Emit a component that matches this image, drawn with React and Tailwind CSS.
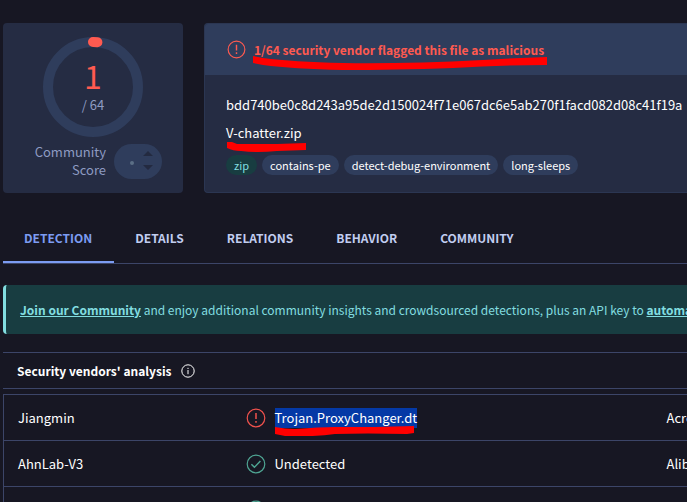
import clsx from 'clsx';

const tabs = ['Detection', 'Details', 'Relations', 'Behavior', 'Community'];

const tags = ['zip', 'contains-pe', 'detect-debug-environment', 'long-sleeps'];

const vendors = [
  { left: 'Jiangmin', result: 'Trojan.ProxyChanger.dt', malicious: true, right: 'Acronis (Static ML)' },
  { left: 'AhnLab-V3', result: 'Undetected', right: 'Alibaba' },
  { left: 'ALYac', result: 'Undetected', right: 'Antiy-AVL' },
];

const AlertIcon = ({ className }) => (
  <svg viewBox="0 0 20 20" fill="none" stroke="currentColor" strokeWidth="1.2" className={className} aria-hidden="true">
    <circle cx="10" cy="10" r="8.8" />
    <path d="M10 5v6" strokeWidth="1.5" />
    <path d="M10 13v1.7" strokeWidth="1.5" />
  </svg>
);

const CheckIcon = ({ className }) => (
  <svg viewBox="0 0 20 20" fill="none" stroke="currentColor" strokeWidth="1.2" className={className} aria-hidden="true">
    <circle cx="10" cy="10" r="8.8" />
    <path d="m5.4 10.3 3 3 6-6.2" strokeWidth="1.5" />
  </svg>
);

const InfoIcon = ({ className }) => (
  <svg viewBox="0 0 14 14" fill="none" stroke="currentColor" className={className} aria-hidden="true">
    <circle cx="7" cy="7" r="6.2" />
    <path d="M7 6v4.2M7 3.8v1.2" />
  </svg>
);

// Hand drawn marker line below a piece of text
const Marker = ({ viewBox, d, className }) => (
  <svg viewBox={viewBox} preserveAspectRatio="none" fill="#ff0000" className={clsx('absolute max-w-none pointer-events-none', className)} aria-hidden="true">
    <path d={d} />
  </svg>
);

const ScoreCard = () => (
  <section className="w-45 shrink-0 rounded bg-[#252c43] py-[14px]">
    <div className="relative mx-auto size-[100px]">
      <svg viewBox="0 0 100 100" fill="none" strokeWidth="10" className="size-full" aria-hidden="true">
        <circle cx="50" cy="50" r="45" stroke="#2f3d5c" />
        <path d="M50 5A45 45 0 0 1 54.4 5.2" stroke="#ff5a50" strokeLinecap="round" />
      </svg>
      <div className="absolute inset-0 flex flex-col items-center pt-5 text-[#8e9bc2]">
        <span className="text-[32px] leading-9 text-[#ff5a50]">1</span>
        <span className="text-[13px] leading-6">/ 64</span>
      </div>
    </div>
    <div className="mt-[6px] flex items-center justify-end gap-2 pr-[21px]">
      <div className="w-20 text-right text-[13px] leading-[18px] text-[#8e9bc2]">Community Score</div>
      <div className="flex h-[35px] w-12 items-center rounded-full bg-[#2f3d5c] pl-4">
        <svg viewBox="0 0 24 20" className="h-5 w-6" aria-hidden="true">
          <circle cx="2" cy="12" r="2" fill="#5b6f86" />
          <path d="M13 5l5-5 5 5zM13 14h10l-5 5z" fill="#232a40" />
        </svg>
      </div>
    </div>
  </section>
);

const FileCard = () => (
  <section className="min-w-0 flex-1 overflow-hidden rounded-l border border-r-0 border-[#2b3652] bg-[#252c43]">
    <div className="flex h-[51px] items-center gap-2 bg-[#2f3d5c] pl-[22px] text-[#ff5a50]">
      <AlertIcon className="size-[19px] shrink-0" />
      <h1 className="relative text-[12px] leading-5 font-bold whitespace-nowrap">
        1/64 security vendor flagged this file as malicious
        <Marker
          viewBox="0 0 294 14"
          d="M0 0L10 2Q40 6 90 7Q150 8 230 4Q260 2 294 1V9Q250 9 200 12Q140 14 90 14Q40 13 10 9L0 7Z"
          className="-left-px top-4 h-[14px] w-[294px]"
        />
      </h1>
    </div>
    <div className="px-[21px] pt-5 pb-[17px] text-[13px] text-white">
      <p className="leading-5 whitespace-nowrap">bdd740be0c8d243a95de2d150024f71e067dc6e5ab270f1facd082d08c41f19a</p>
      <p className="relative mt-2 w-fit leading-5">
        V-chatter.zip
        <Marker
          viewBox="0 0 79 10"
          d="M0 0H5L10 2H50L79 1V8L50 9Q30 11 14 9Q6 9 0 6Z"
          className="top-[19px] left-px h-[10px] w-[79px]"
        />
      </p>
      <ul className="mt-3 flex gap-[5px] text-[11px] leading-5">
        {tags.map((tag) => (
          <li
            key={tag}
            className={clsx('rounded-full px-2 whitespace-nowrap', tag === 'zip' ? 'bg-[#183d41] text-[#82dde0]' : 'bg-[#2f3d5c]')}
          >
            {tag}
          </li>
        ))}
      </ul>
    </div>
  </section>
);

const VendorRow = ({ vendor }) => (
  <tr className="h-[46px] border-b border-[#3c4568]">
    <td className="pl-[14px]">{vendor.left}</td>
    <td>
      <div className="flex items-center gap-[9px]">
        {vendor.malicious ? (
          <AlertIcon className="size-5 shrink-0 text-[#f0524d]" />
        ) : (
          <CheckIcon className="size-5 shrink-0 text-[#4fa593]" />
        )}
        <span className={clsx('relative leading-5', vendor.malicious && 'bg-[#0439a6]')}>
          {vendor.result}
          {vendor.malicious && (
            <Marker
              viewBox="0 0 139 10"
              d="M0 1Q10 3 20 3Q45 1 60 1L100 1L139 0V7L132 8Q90 7 60 8Q40 11 10 10L0 8Z"
              className="top-[18px] left-0 h-[10px] w-[139px]"
            />
          )}
        </span>
      </div>
    </td>
    <td>{vendor.right}</td>
  </tr>
);

const App = () => {
  return (
    <main className="h-screen overflow-hidden bg-[#171723] pt-[23px] pl-[3px] font-['Noto_Sans_CJK_SC','Noto_Sans',sans-serif] text-white">
      <div className="flex gap-[21px]">
        <ScoreCard />
        <FileCard />
      </div>

      <nav className="mt-[21px] flex border-b border-[#3c4568] pr-5 text-[12px] font-bold">
        {tabs.map((tab, i) => (
          <button
            key={tab}
            type="button"
            className={clsx(
              'h-[49px] border-b-2 pr-[22px] pl-[21px] uppercase',
              i === 0 ? 'border-[#7c9cf2] text-[#7c9cf2]' : 'border-transparent text-[#c1cdf0]'
            )}
          >
            {tab}
          </button>
        ))}
      </nav>

      <p className="mt-[21px] overflow-hidden rounded-l border-l-3 border-[#82dde0] bg-[#183d41] py-[14px] pl-[14px] text-[12px] leading-[21px] whitespace-nowrap text-[#82dde0]">
        <a href="#join" className="font-bold underline">Join our Community</a> and enjoy additional community insights and
        crowdsourced detections, plus an API key to <a href="#api" className="font-bold underline">automate checks.</a>
      </p>

      <h2 className="mt-[18px] flex h-[37px] items-center gap-[10px] border-y border-[#3c4568] pl-[14px] text-[12px] font-bold">
        Security vendors' analysis
        <InfoIcon className="size-[14px]" />
      </h2>

      <div className="mt-[5px] overflow-hidden">
        <table className="w-full min-w-[1300px] table-fixed border border-[#3c4568] text-[13px]">
          <colgroup>
            <col className="w-[242px]" />
            <col className="w-[421px]" />
            <col />
          </colgroup>
          <tbody>
            {vendors.map((vendor) => (
              <VendorRow key={vendor.left} vendor={vendor} />
            ))}
          </tbody>
        </table>
      </div>
    </main>
  );
};

export default App;
